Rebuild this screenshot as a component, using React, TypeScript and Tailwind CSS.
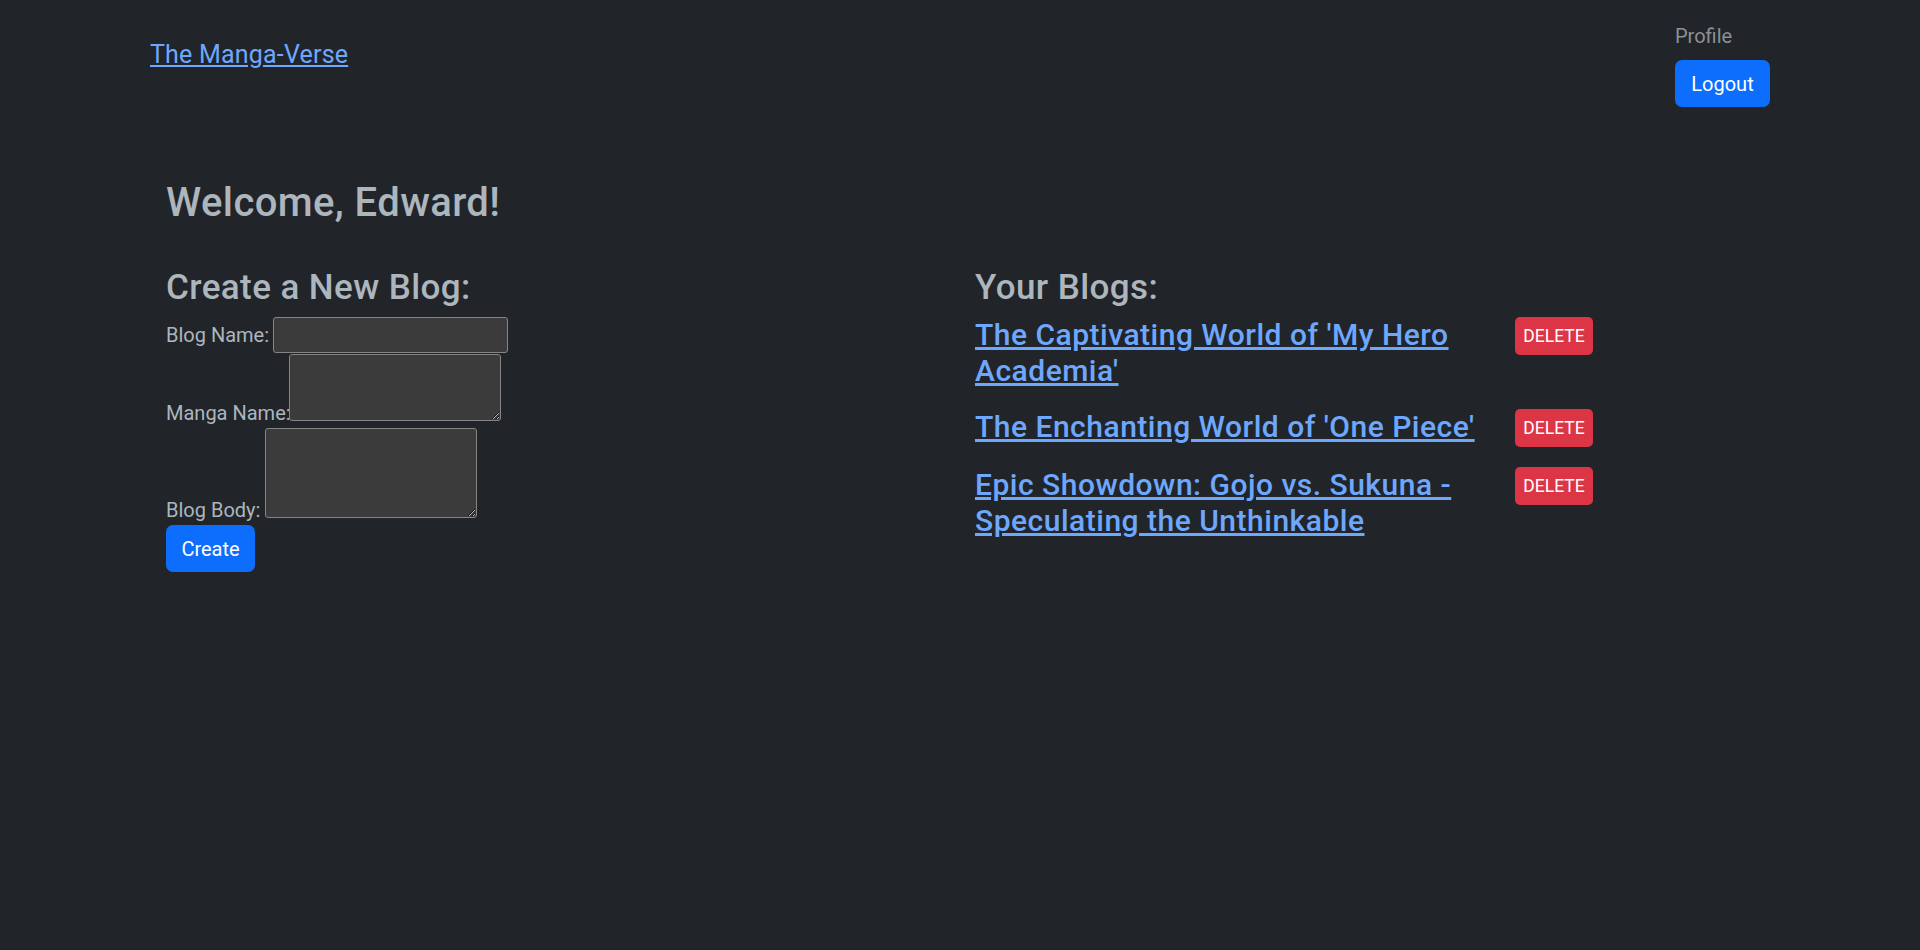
import { useState } from "react";

const blogs = [
  { id: 1, title: "The Captivating World of 'My Hero Academia'" },
  { id: 2, title: "The Enchanting World of 'One Piece'" },
  { id: 3, title: "Epic Showdown: Gojo vs. Sukuna - Speculating the Unthinkable" },
];

function Navbar() {
  return (
    <header className="flex items-start justify-between px-[150px] pt-[20px]">
      <a href="#" className="mt-[16px] text-[25px] leading-[37px] tracking-[0.2px] text-[#6ea8fe] underline">
        The Manga-Verse
      </a>
      <div className="flex flex-col items-start">
        <a href="#" className="pt-[1px] text-[20px] leading-[30px] text-[#8b9095]">
          Profile
        </a>
        <button
          type="button"
          className="mt-[9px] flex h-[47px] w-[95px] items-center justify-center rounded-[7px] bg-[#0d6efd] text-[20px] text-white"
        >
          Logout
        </button>
      </div>
    </header>
  );
}

function CreateBlogForm() {
  const [name, setName] = useState("");
  const [manga, setManga] = useState("");
  const [body, setBody] = useState("");

  return (
    <div className="pl-[166px]">
      <h3 className="mb-[8px] text-[35px] font-medium leading-[42px] tracking-[0.4px] text-[#adb5bd]">
        Create a New Blog:
      </h3>
      <form className="flex flex-col text-[20px] leading-[30px] text-[#adb5bd]">
        <div className="flex items-center">
          <label className="w-[107px] whitespace-nowrap">Blog Name:</label>
          <input
            value={name}
            onChange={(e) => setName(e.target.value)}
            className="h-[36px] w-[235px] rounded-[3px] border border-[#858585] bg-[#3b3b3b] px-1 text-white outline-none"
          />
        </div>
        <div className="mt-[1px] flex items-end">
          <label className="mb-[-7px] w-[123px] whitespace-nowrap">Manga Name:</label>
          <textarea
            value={manga}
            onChange={(e) => setManga(e.target.value)}
            className="h-[67px] w-[212px] rounded-[3px] border border-[#858585] bg-[#3b3b3b] text-white outline-none"
          />
        </div>
        <div className="mt-[7px] flex items-end">
          <label className="mb-[-7px] w-[99px] whitespace-nowrap">Blog Body:</label>
          <textarea
            value={body}
            onChange={(e) => setBody(e.target.value)}
            className="h-[90px] w-[212px] rounded-[3px] border border-[#858585] bg-[#3b3b3b] text-white outline-none"
          />
        </div>
        <button
          type="button"
          className="mt-[7px] flex h-[47px] w-[89px] items-center justify-center rounded-[7px] bg-[#0d6efd] text-[20px] text-white"
        >
          Create
        </button>
      </form>
    </div>
  );
}

function BlogList() {
  return (
    <div className="pl-[15px]">
      <h3 className="mb-[8px] text-[35px] font-medium leading-[42px] tracking-[0.4px] text-[#adb5bd]">
        Your Blogs:
      </h3>
      <ul className="flex flex-col gap-[20px]">
        {blogs.map((blog) => (
          <li key={blog.id} className="flex items-start">
            <h4 className="w-[525px] text-[30px] font-medium leading-[36px] tracking-[0.5px]">
              <a href="#" className="text-[#6ea8fe] underline">
                {blog.title}
              </a>
            </h4>
            <button
              type="button"
              className="ml-[15px] flex h-[38px] w-[78px] items-center justify-center rounded-[5px] bg-[#dc3545] text-[17.5px] text-white"
            >
              DELETE
            </button>
          </li>
        ))}
      </ul>
    </div>
  );
}

export default function App() {
  return (
    <div className="min-h-screen w-full bg-[#212529] font-['Roboto','Liberation_Sans',sans-serif]">
      <Navbar />
      <main className="pt-[72px]">
        <h2 className="pl-[166px] text-[40px] font-medium leading-[48px] tracking-[0.4px] text-[#adb5bd]">
          Welcome, Edward!
        </h2>
        <div className="mt-[40px] grid grid-cols-[960px_1fr]">
          <CreateBlogForm />
          <BlogList />
        </div>
      </main>
    </div>
  );
}
